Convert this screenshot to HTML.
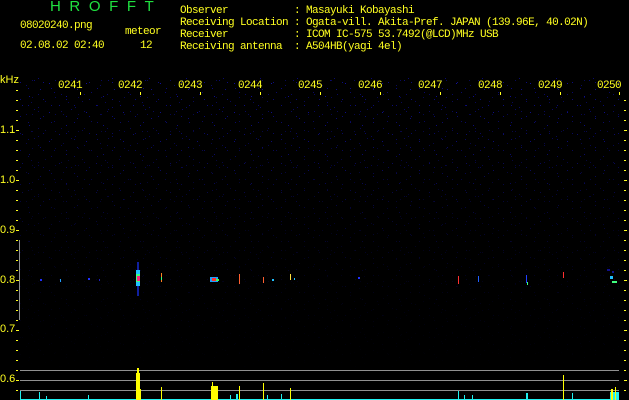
<!DOCTYPE html>
<html><head><meta charset="utf-8"><style>
html,body{margin:0;padding:0;background:#000;width:629px;height:400px;overflow:hidden}
.t{position:absolute;font-family:"Liberation Mono",monospace;font-size:11px;letter-spacing:-0.6px;color:#ffff20;white-space:pre;line-height:12px}
.g{color:#20e040;font-family:"Liberation Sans",sans-serif;font-size:15px;letter-spacing:8.6px}
.ax{position:absolute;font-family:"Liberation Sans",sans-serif;font-size:11px;color:#ffff20;line-height:12px}
svg{position:absolute;left:0;top:0}
</style></head><body>
<svg width="629" height="400">
<defs>
<pattern id="n" width="37" height="29" patternUnits="userSpaceOnUse">
<rect x="3" y="2" width="1" height="1" fill="#10108a"/><rect x="17" y="5" width="1" height="1" fill="#0a0a70"/><rect x="29" y="9" width="1" height="1" fill="#10109a"/><rect x="8" y="14" width="1" height="1" fill="#0a0a60"/><rect x="22" y="18" width="1" height="1" fill="#10108a"/><rect x="34" y="22" width="1" height="1" fill="#0a0a70"/><rect x="12" y="25" width="1" height="1" fill="#1010a0"/><rect x="26" y="27" width="1" height="1" fill="#0a0a60"/><rect x="1" y="20" width="1" height="1" fill="#0a0a70"/><rect x="31" y="15" width="1" height="1" fill="#0a0a60"/>
</pattern>
<pattern id="n2" width="23" height="17" patternUnits="userSpaceOnUse">
<rect x="5" y="3" width="1" height="1" fill="#0c0c80"/><rect x="15" y="9" width="1" height="1" fill="#0a0a68"/><rect x="20" y="14" width="1" height="1" fill="#0c0c80"/><rect x="9" y="12" width="1" height="1" fill="#08085a"/>
</pattern>
<linearGradient id="fade" x1="0" y1="0" x2="0" y2="1"><stop offset="0" stop-color="#fff"/><stop offset="0.5" stop-color="#555"/><stop offset="1" stop-color="#000"/></linearGradient>
<mask id="m"><rect x="20" y="78" width="600" height="300" fill="url(#fade)"/></mask>
</defs>
<g mask="url(#m)"><rect x="20" y="78" width="600" height="300" fill="url(#n)"/><rect x="20" y="78" width="600" height="300" fill="url(#n2)"/></g>
<g fill="#ffff20">
<rect x="80" y="92" width="1" height="3"/><rect x="140" y="92" width="1" height="3"/><rect x="200" y="92" width="1" height="3"/><rect x="260" y="92" width="1" height="3"/><rect x="320" y="92" width="1" height="3"/><rect x="380" y="92" width="1" height="3"/><rect x="440" y="92" width="1" height="3"/><rect x="500" y="92" width="1" height="3"/><rect x="560" y="92" width="1" height="3"/><rect x="619" y="92" width="1" height="3"/>
<rect x="16" y="90" width="2" height="1"/>
</g>
<g id="lt" fill="#ffff20">
<rect x="16" y="100" width="2" height="1"/><rect x="16" y="110" width="2" height="1"/><rect x="16" y="120" width="2" height="1"/><rect x="16" y="130" width="3" height="1"/><rect x="16" y="140" width="2" height="1"/><rect x="16" y="150" width="2" height="1"/><rect x="16" y="160" width="2" height="1"/><rect x="16" y="170" width="2" height="1"/><rect x="16" y="180" width="3" height="1"/><rect x="16" y="190" width="2" height="1"/><rect x="16" y="200" width="2" height="1"/><rect x="16" y="210" width="2" height="1"/><rect x="16" y="220" width="2" height="1"/><rect x="16" y="230" width="3" height="1"/><rect x="16" y="240" width="2" height="1"/><rect x="16" y="250" width="2" height="1"/><rect x="16" y="260" width="2" height="1"/><rect x="16" y="270" width="2" height="1"/><rect x="16" y="280" width="3" height="1"/><rect x="16" y="290" width="2" height="1"/><rect x="16" y="300" width="2" height="1"/><rect x="16" y="310" width="2" height="1"/><rect x="16" y="320" width="2" height="1"/><rect x="16" y="330" width="3" height="1"/><rect x="16" y="340" width="2" height="1"/><rect x="16" y="350" width="2" height="1"/><rect x="16" y="360" width="2" height="1"/><rect x="16" y="370" width="2" height="1"/><rect x="16" y="380" width="3" height="1"/><rect x="16" y="390" width="2" height="1"/>
</g>
<use href="#lt" x="608"/>
<rect x="19" y="240" width="1" height="80" fill="#909090"/>
<g fill="#909090"><rect x="20" y="370" width="599" height="1"/><rect x="20" y="380" width="599" height="1"/><rect x="20" y="390" width="599" height="1"/></g>
<g>
<rect x="40" y="279" width="2" height="2" fill="#2030ff"/><rect x="60" y="279" width="1" height="3" fill="#20a0ff"/><rect x="88" y="278" width="2" height="2" fill="#2030ff"/><rect x="99" y="279" width="1" height="2" fill="#2020c0"/>
<rect x="137" y="262" width="2" height="34" fill="#1020a0"/><rect x="136" y="270" width="4" height="16" fill="#20c0ff"/><rect x="136" y="274" width="4" height="8" fill="#40ff80"/><rect x="137" y="276" width="3" height="5" fill="#ff2080"/>
<rect x="161" y="273" width="1" height="9" fill="#ff8020"/><rect x="161" y="277" width="1" height="3" fill="#30ff80"/>
<rect x="210" y="277" width="8" height="5" fill="#20a0ff"/><rect x="212" y="278" width="4" height="3" fill="#ff3030"/><rect x="216" y="279" width="3" height="2" fill="#40ff60"/>
<rect x="239" y="274" width="1" height="10" fill="#ff6030"/><rect x="263" y="277" width="1" height="6" fill="#ff6030"/><rect x="272" y="279" width="2" height="2" fill="#20c0ff"/><rect x="290" y="274" width="1" height="6" fill="#ffe040"/><rect x="294" y="278" width="1" height="2" fill="#20c0ff"/>
<rect x="358" y="277" width="2" height="2" fill="#2030ff"/><rect x="458" y="276" width="1" height="8" fill="#ff3030"/><rect x="478" y="276" width="1" height="6" fill="#2060ff"/><rect x="526" y="275" width="1" height="8" fill="#2040ff"/><rect x="527" y="282" width="1" height="3" fill="#40ff80"/>
<rect x="563" y="272" width="1" height="6" fill="#ff3030"/><rect x="610" y="276" width="3" height="3" fill="#20c0ff"/><rect x="612" y="281" width="5" height="2" fill="#40ff80"/><rect x="607" y="269" width="3" height="2" fill="#10108a"/><rect x="612" y="271" width="2" height="2" fill="#10108a"/>
</g>
<g fill="#20f0f0">
<rect x="20" y="399" width="599" height="1"/><rect x="20" y="391" width="1" height="9"/><rect x="39" y="392" width="1" height="8"/><rect x="46" y="396" width="1" height="4"/><rect x="88" y="395" width="1" height="5"/><rect x="230" y="395" width="1" height="5"/><rect x="236" y="394" width="2" height="6"/><rect x="267" y="395" width="1" height="5"/><rect x="281" y="394" width="1" height="6"/><rect x="458" y="391" width="1" height="9"/><rect x="464" y="395" width="1" height="5"/><rect x="472" y="395" width="1" height="5"/><rect x="526" y="393" width="2" height="7"/><rect x="572" y="393" width="1" height="7"/><rect x="610" y="392" width="9" height="8"/>
</g>
<g fill="#ffff00">
<rect x="137" y="368" width="2" height="32"/><rect x="136" y="373" width="4" height="27"/><rect x="136" y="389" width="5" height="11"/>
<rect x="212" y="382" width="1" height="18"/><rect x="211" y="386" width="7" height="14"/><rect x="161" y="387" width="1" height="13"/><rect x="239" y="386" width="1" height="14"/><rect x="263" y="383" width="1" height="17"/><rect x="290" y="388" width="1" height="12"/><rect x="563" y="375" width="1" height="25"/><rect x="611" y="389" width="2" height="11"/><rect x="615" y="387" width="1" height="13"/>
</g>
</svg>
<div class="t g" style="left:50px;top:1px">HROFFT</div>
<div class="t" style="left:20px;top:20px">08020240.png</div>
<div class="t" style="left:125px;top:26px">meteor</div>
<div class="t" style="left:20px;top:40px">02.08.02 02:40</div>
<div class="t" style="left:140px;top:40px">12</div>
<div class="t" style="left:180px;top:5px">Observer           : Masayuki Kobayashi
Receiving Location : Ogata-vill. Akita-Pref. JAPAN (139.96E, 40.02N)
Receiver           : ICOM IC-575 53.7492(@LCD)MHz USB
Receiving antenna  : A504HB(yagi 4el)</div>
<div class="ax" style="left:0px;top:74px">kHz</div>
<div class="t" style="left:58px;top:80px">0241</div><div class="t" style="left:118px;top:80px">0242</div><div class="t" style="left:178px;top:80px">0243</div><div class="t" style="left:238px;top:80px">0244</div><div class="t" style="left:298px;top:80px">0245</div><div class="t" style="left:358px;top:80px">0246</div><div class="t" style="left:418px;top:80px">0247</div><div class="t" style="left:478px;top:80px">0248</div><div class="t" style="left:538px;top:80px">0249</div><div class="t" style="left:597px;top:80px">0250</div>
<div class="ax" style="left:0px;top:124px">1.1</div>
<div class="ax" style="left:0px;top:174px">1.0</div>
<div class="ax" style="left:0px;top:224px">0.9</div>
<div class="ax" style="left:0px;top:274px">0.8</div>
<div class="ax" style="left:0px;top:323px">0.7</div>
<div class="ax" style="left:0px;top:373px">0.6</div>
</body></html>
